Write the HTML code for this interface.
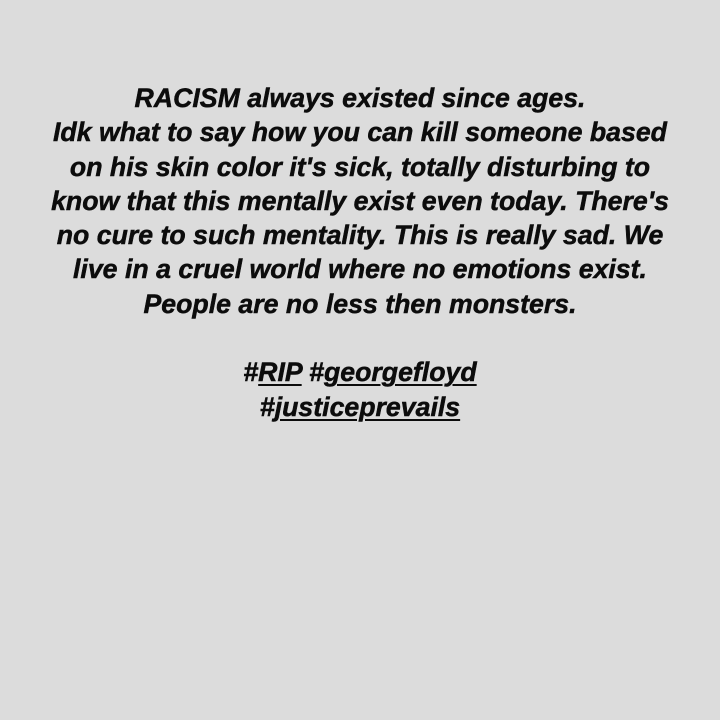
<!DOCTYPE html>
<html><head><meta charset="utf-8"><style>
html,body{margin:0;padding:0;background:#dcdcdc;width:720px;height:720px;overflow:hidden}
.t{position:absolute;left:0;top:81px;width:720px;font-family:"Liberation Sans Narrow","Liberation Sans",sans-serif;font-weight:bold;font-style:italic;font-size:26.7px;line-height:34.3px;color:#0c0c0c;text-align:center;-webkit-text-stroke:0.5px #0c0c0c}
.l{display:block;white-space:nowrap}
u{text-decoration-thickness:2px;text-underline-offset:3px}
</style></head><body>
<div class="t">
<span class="l">RACISM always existed since ages.</span>
<span class="l">Idk what to say how you can kill someone based</span>
<span class="l">on his skin color it's sick, totally disturbing to</span>
<span class="l">know that this mentally exist even today. There's</span>
<span class="l">no cure to such mentality. This is really sad. We</span>
<span class="l">live in a cruel world where no emotions exist.</span>
<span class="l">People are no less then monsters.</span>
<span class="l">&nbsp;</span>
<span class="l">#<u>RIP</u> #<u>georgefloyd</u></span>
<span class="l">#<u>justiceprevails</u></span>
</div>
</body></html>
